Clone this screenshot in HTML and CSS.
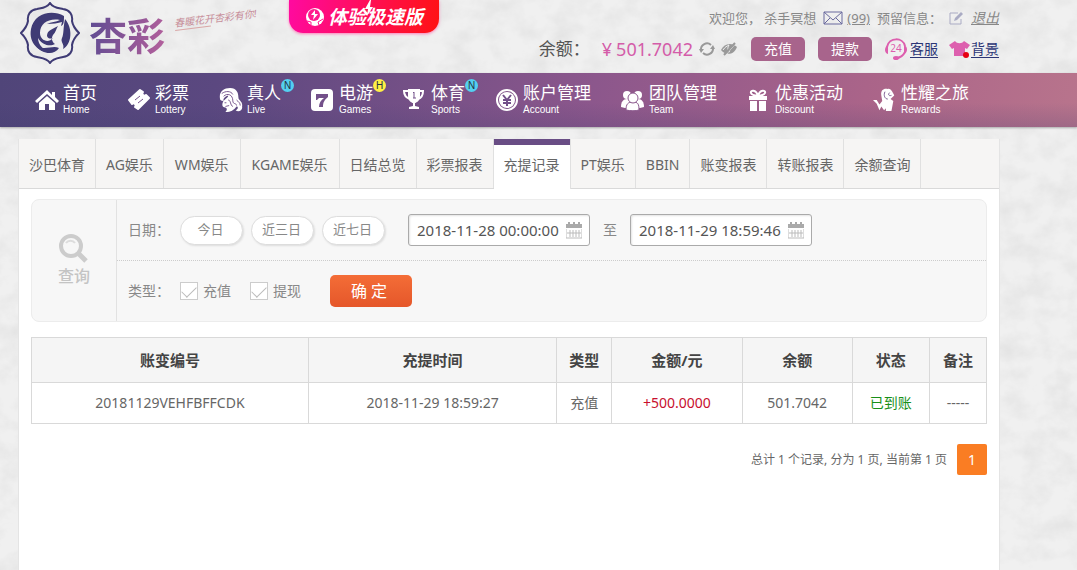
FILE: index.html
```html
<!DOCTYPE html>
<html lang="zh-CN">
<head>
<meta charset="utf-8">
<meta name="viewport" content="width=device-width, initial-scale=1">
<title>充提记录</title>
<link rel="stylesheet" href="styles.css">
</head>
<body>
<svg class="texture" aria-hidden="true">
  <defs>
    <filter id="grain" x="0" y="0" width="100%" height="100%">
      <feTurbulence type="fractalNoise" baseFrequency="0.04 0.05" numOctaves="5" seed="8"/>
      <feColorMatrix values="0 0 0 0 0.6  0 0 0 0 0.6  0 0 0 0 0.6  0.6 0 0 0 -0.22"/>
    </filter>
  </defs>
  <rect width="100%" height="100%" filter="url(#grain)"/>
</svg>

<header class="header">
  <a class="brand" href="#" aria-label="杏彩">
    <svg class="emblem" viewBox="0 0 60 62" aria-hidden="true">
      <path class="emblem-line" d="M30 1C33 6 38 6 43 7C50 8 53 13 52 19C53 25 56 28 59 31C56 34 53 37 52 43C53 49 50 54 43 55C38 56 33 56 30 61C27 56 22 56 17 55C10 54 7 49 8 43C7 37 4 34 1 31C4 28 7 25 8 19C7 13 10 8 17 7C22 6 27 6 30 1Z"/>
      <path class="emblem-fill" d="M44 14C32 7 14 11 11 27C8 43 22 52 32 50C24 49 18 43 18 36C22 43 30 45 35 42C32 40 31 36 33 33C36 30 36 27 38 24C33 27 27 28 27 34C28 37 31 37 33 36C28 42 20 38 20 31C20 21 29 16 40 18C36 20 31 20 27 22C33 22 38 21 42 20L41 24C44 23 44 19 44 14Z"/>
      <path class="emblem-fill" d="M45 17C53 26 52 42 43 47C45 42 40 40 42 36C44 32 43 26 45 17ZM16 44C26 49 32 43 39 46C34 54 22 52 16 44Z"/>
    </svg>
    <span class="wordmark">杏彩</span>
    <span class="slogan">春暖花开杏彩有你!</span>
  </a>

  <a class="promo" href="#">
    <svg class="promo-icon" viewBox="0 0 20 20" aria-hidden="true">
      <circle cx="10" cy="10" r="9" fill="#fff"/>
      <circle cx="9" cy="8" r="6" fill="#ff1a8e"/>
      <path d="M10 3L6 8H9L8 13L13 7H10Z" fill="#fff"/>
      <path d="M2 14L6 15L6 18M18 12L13 15L14 18" fill="none" stroke="#ff1a8e"/>
    </svg>
    <span>体验极速版</span>
    <svg class="promo-bolt" viewBox="0 0 10 16" aria-hidden="true"><path d="M6 0L1 9H4L3 16L9 7H6L7 0Z" fill="#fff"/></svg>
  </a>

  <div class="account">
    <div class="welcome">
      <span>欢迎您， 杀手冥想</span>
      <a class="mail" href="#">
        <svg viewBox="0 0 20 14" width="20" height="14" aria-hidden="true"><path d="M1 1H19V13H1ZM1 1L10 9L19 1M1 13L7 7M19 13L13 7" fill="none" stroke="#69699d"/></svg>
        <span class="mail-count">(99)</span>
      </a>
      <span>预留信息：</span>
      <a class="edit" href="#" aria-label="编辑">
        <svg viewBox="0 0 15 15" width="15" height="15" aria-hidden="true"><path d="M9 2H1V13H12V8" fill="none" stroke="#aaabc4"/><path d="M5 10L6 7L12 1L14 3L8 9Z" fill="#aaabc4"/></svg>
      </a>
      <a class="logout" href="#">退出</a>
    </div>
    <div class="funds">
      <span class="balance-label">余额：</span>
      <span class="balance">¥<span>501.7042</span></span>
      <button class="icon-button" type="button" aria-label="刷新">
        <svg viewBox="0 0 16 16" width="16" height="16" aria-hidden="true"><path d="M2 9A6 6 0 0 1 12 4M14 7A6 6 0 0 1 4 12" fill="none" stroke="#999" stroke-width="2"/><path d="M0 8H5L2 12ZM11 8H16L14 4Z" fill="#999"/></svg>
      </button>
      <button class="icon-button" type="button" aria-label="隐藏余额">
        <svg viewBox="0 0 18 16" width="18" height="16" aria-hidden="true"><path d="M1 9C4 2 12 1 17 6C14 14 6 15 1 9Z" fill="#999"/><path d="M3 9C5 6 7 5 9 4C7 7 8 10 10 11" fill="none" stroke="#eee"/><path d="M5 15L16 2" stroke="#eee"/><path d="M4 14L15 2" stroke="#999" stroke-width="2"/></svg>
      </button>
      <button class="fund-button" type="button">充值</button>
      <button class="fund-button" type="button">提款</button>
      <a class="tool" href="#">
        <svg viewBox="0 0 24 24" width="24" height="24" aria-hidden="true"><path d="M3 10C5 0 19 0 21 9M21 15C19 19 16 21 12 21" fill="none" stroke="#dd5fae" stroke-width="2"/><path d="M4 8V17C0 16 0 10 4 8ZM20 8C24 9 24 16 20 17Z" fill="#dd5fae"/><ellipse cx="12" cy="21" rx="3" ry="2" fill="#dd5fae"/><text x="12" y="15" text-anchor="middle" font-size="10" fill="#dd5fae">24</text></svg>
        <span>客服</span>
      </a>
      <a class="tool tool-last" href="#">
        <svg viewBox="0 0 21 20" width="21" height="20" aria-hidden="true"><path d="M6 2C8 5 13 5 15 2L21 6L18 10L16 9V17H5V9L3 10L0 6Z" fill="#dd5fae"/><circle cx="17" cy="16" r="3" fill="#e60012"/></svg>
        <span>背景</span>
      </a>
    </div>
  </div>
</header>

<nav class="nav" aria-label="主导航">
  <a class="nav-item" href="#">
    <svg viewBox="0 0 24 24" aria-hidden="true"><path d="M12 2L0 13L2 15L12 6L22 15L24 13L20 9V4H17V7ZM12 8L4 15V22H10V16H14V22H20V15Z"/></svg>
    <span class="nav-text"><span class="nav-cn">首页</span><span class="nav-en">Home</span></span>
  </a>
  <a class="nav-item" href="#">
    <svg viewBox="0 0 24 24" aria-hidden="true"><path d="M2 12L13 2L16 4A2 2 0 0 0 19 7L22 10L11 21L8 19A2 2 0 0 0 5 16Z" stroke="#fff" stroke-width="2" stroke-linejoin="round"/><path class="cut" d="M8 12L13 8M11 15L16 11"/></svg>
    <span class="nav-text"><span class="nav-cn">彩票</span><span class="nav-en">Lottery</span></span>
  </a>
  <a class="nav-item" href="#">
    <svg viewBox="0 0 24 26" aria-hidden="true"><path d="M0 11C-1 4 4 0 11 0C18 0 20 5 20 10C20 14 25 14 24 20C25 24 20 27 17 24C20 23 20 20 18 20C15 24 12 26 6 26C8 24 8 22 6 21C3 21 2 19 3 16C4 12 9 11 9 8C5 9 3 12 4 14C1 14 0 13 0 11Z"/><path class="cut" d="M2 6C6 3 12 3 14 7M4 9C8 5 14 7 14 14C14 18 18 16 18 19M9 13C12 13 11 19 14 20M5 16L7 16M6 20L10 19M18 13C20 15 22 16 22 19"/></svg>
    <span class="nav-text"><span class="nav-cn">真人</span><span class="nav-en">Live</span></span>
    <span class="badge">N</span>
  </a>
  <a class="nav-item" href="#">
    <svg viewBox="0 0 24 24" aria-hidden="true"><rect x="0" y="1" width="22" height="22" rx="4"/><path d="M5 6H17V9C13 12 12 15 12 19H8C8 15 10 12 13 10H8L6 12H5Z" fill="#73508a"/></svg>
    <span class="nav-text"><span class="nav-cn">电游</span><span class="nav-en">Games</span></span>
    <span class="badge badge-hot">H</span>
  </a>
  <a class="nav-item" href="#">
    <svg viewBox="0 0 24 24" aria-hidden="true"><path d="M5 1H17V8C17 13 13 15 12 15V18L16 19V21H6V19L10 18V15C9 15 5 13 5 8Z"/><path d="M5 3H1C1 8 4 10 7 11M17 3H20C20 8 18 10 15 11" fill="none" stroke="#fff" stroke-width="2"/><path class="cut" d="M10 5L11 4V10M10 10H13"/></svg>
    <span class="nav-text"><span class="nav-cn">体育</span><span class="nav-en">Sports</span></span>
    <span class="badge">N</span>
  </a>
  <a class="nav-item" href="#">
    <svg viewBox="0 0 24 24" aria-hidden="true"><circle cx="12" cy="12" r="10" fill="none" stroke="#fff" stroke-width="2"/><circle cx="12" cy="12" r="8"/><path class="cut cut-bold" d="M8 7L12 12L16 7M12 12V18M8 12H16M8 15H16"/></svg>
    <span class="nav-text"><span class="nav-cn">账户管理</span><span class="nav-en">Account</span></span>
  </a>
  <a class="nav-item" href="#">
    <svg viewBox="0 0 24 24" aria-hidden="true"><circle cx="6" cy="7" r="4"/><circle cx="17" cy="7" r="4"/><path d="M0 19C0 14 2 11 6 11H17C21 11 23 14 23 19L19 20H4Z"/><path d="M5 22C5 16 7 14 12 14S18 16 18 22C15 23 9 23 5 22Z" stroke="#8b588d"/><circle cx="12" cy="10" r="5" stroke="#8b588d"/></svg>
    <span class="nav-text"><span class="nav-cn">团队管理</span><span class="nav-en">Team</span></span>
  </a>
  <a class="nav-item" href="#">
    <svg viewBox="0 0 24 24" aria-hidden="true"><path d="M2 8H20V12H2ZM3 13H10V23H3ZM12 13H19V23H12Z"/><path d="M11 8C9 1 3 2 4 5C5 8 9 7 11 8C13 7 17 8 18 5C19 2 13 1 11 8Z" fill="none" stroke="#fff" stroke-width="2"/></svg>
    <span class="nav-text"><span class="nav-cn">优惠活动</span><span class="nav-en">Discount</span></span>
  </a>
  <a class="nav-item" href="#">
    <svg viewBox="0 0 24 26" aria-hidden="true"><path d="M8 8C7 2 11 0 15 1C18 0 20 4 22 8L18 12L21 14L19 25H13V22L11 24L8 20L6 24L3 17L-1 13L3 13L6 18L9 14Z"/><path class="cut" d="M12 4C10 8 12 12 15 12M17 5C15 7 16 9 19 8"/></svg>
    <span class="nav-text"><span class="nav-cn">性耀之旅</span><span class="nav-en">Rewards</span></span>
  </a>
</nav>

<main class="page">
  <nav class="tabs" aria-label="报表">
    <a href="#">沙巴体育</a>
    <a href="#">AG娱乐</a>
    <a href="#" class="roomy">WM娱乐</a>
    <a href="#" class="roomy">KGAME娱乐</a>
    <a href="#">日结总览</a>
    <a href="#">彩票报表</a>
    <a href="#" class="active" aria-current="page">充提记录</a>
    <a href="#">PT娱乐</a>
    <a href="#">BBIN</a>
    <a href="#">账变报表</a>
    <a href="#">转账报表</a>
    <a href="#">余额查询</a>
  </nav>

  <form class="search">
    <div class="search-title">
      <svg viewBox="0 0 30 30" width="30" height="30" aria-hidden="true"><circle cx="12" cy="12" r="10" fill="none" stroke="#ccc" stroke-width="4"/><path d="M20 20L27 27" stroke="#ccc" stroke-width="5"/><path d="M7 9C9 6 14 6 16 9" fill="none" stroke="#ddd" stroke-width="2"/></svg>
      <span>查询</span>
    </div>
    <div class="search-rows">
      <div class="search-row search-date">
        <span class="search-label">日期：</span>
        <div class="pills">
          <button class="pill" type="button">今日</button>
          <button class="pill" type="button">近三日</button>
          <button class="pill" type="button">近七日</button>
        </div>
        <div class="date-field">
          <input type="text" value="2018-11-28 00:00:00" aria-label="开始时间">
          <svg viewBox="0 0 16 17" width="16" height="17" aria-hidden="true"><path d="M0 2H2V0H4V2H7V0H9V2H12V0H14V2H16V6H0Z" fill="#aaa"/><path d="M0 7V16H16V7M4 8V15M7 8V15M10 8V15M13 8V15M1 11H15" fill="none" stroke="#bbb"/></svg>
        </div>
        <span class="to">至</span>
        <div class="date-field">
          <input type="text" value="2018-11-29 18:59:46" aria-label="结束时间">
          <svg viewBox="0 0 16 17" width="16" height="17" aria-hidden="true"><path d="M0 2H2V0H4V2H7V0H9V2H12V0H14V2H16V6H0Z" fill="#aaa"/><path d="M0 7V16H16V7M4 8V15M7 8V15M10 8V15M13 8V15M1 11H15" fill="none" stroke="#bbb"/></svg>
        </div>
      </div>
      <div class="search-row">
        <span class="search-label">类型：</span>
        <div class="checks">
          <label><input type="checkbox" checked>充值</label>
          <label><input type="checkbox" checked>提现</label>
        </div>
        <button class="submit" type="submit">确 定</button>
      </div>
    </div>
  </form>

  <table class="records">
    <colgroup>
      <col class="col-id"><col class="col-time"><col class="col-type"><col class="col-amount"><col class="col-balance"><col class="col-status"><col class="col-note">
    </colgroup>
    <thead>
      <tr><th>账变编号</th><th>充提时间</th><th>类型</th><th>金额/元</th><th>余额</th><th>状态</th><th>备注</th></tr>
    </thead>
    <tbody>
      <tr><td>20181129VEHFBFFCDK</td><td>2018-11-29 18:59:27</td><td>充值</td><td class="plus">+500.0000</td><td>501.7042</td><td class="done">已到账</td><td>-----</td></tr>
    </tbody>
  </table>

  <div class="pager">
    <span>总计 1 个记录, 分为 1 页, 当前第 1 页</span>
    <a href="#" aria-current="page">1</a>
  </div>
</main>
</body>
</html>
```

FILE: styles.css
```css
* {
  box-sizing: border-box;
}

body {
  margin: 0;
  min-height: 100vh;
  display: flex;
  flex-direction: column;
  background: #f0f0f0;
  color: #666;
  font: 14px/20px "Noto Sans", "Noto Sans CJK SC", sans-serif;
}

a {
  color: inherit;
  text-decoration: none;
}

button,
input {
  font: inherit;
  color: inherit;
}

svg {
  display: block;
  flex: none;
}

.texture {
  position: absolute;
  inset: 0;
  width: 100%;
  height: 100%;
  z-index: -1;
}

/* Header */
.header {
  display: flex;
  align-items: flex-start;
  max-width: 999px;
  height: 73px;
  padding-left: 20px;
}

.brand {
  display: flex;
  align-items: flex-start;
  flex: none;
  width: 269px;
  padding-top: 2px;
}

.emblem {
  width: 60px;
  height: 62px;
}

.emblem-line {
  fill: none;
  stroke: #3f3b75;
  stroke-width: 2;
}

.emblem-fill {
  fill: #3f3b75;
}

.wordmark {
  margin: 9px 9px 0 9px;
  font-size: 38px;
  line-height: 48px;
  font-weight: 700;
  background: linear-gradient(100deg, #5d4b92, #b5609c);
  background-clip: text;
  -webkit-background-clip: text;
  color: transparent;
}

.slogan {
  margin-top: 9px;
  color: #c78c98;
  font-size: 10px;
  line-height: 14px;
  font-style: italic;
  white-space: nowrap;
  transform: rotate(-7deg);
}

.slogan::after {
  content: "";
  display: block;
  width: 36px;
  border-top: 1px solid #d9a7a7;
}

.promo {
  position: relative;
  display: flex;
  align-items: center;
  justify-content: center;
  gap: 3px;
  flex: none;
  width: 150px;
  height: 33px;
  border-radius: 0 0 14px 14px;
  background: linear-gradient(100deg, #ff0aa0, #ff1212);
  box-shadow: 0 1px 3px #ff7cb8;
  color: #fff;
  font-size: 19px;
  line-height: 28px;
  font-weight: 700;
  font-style: italic;
}

.promo-icon {
  width: 20px;
  height: 20px;
}

.promo-bolt {
  position: absolute;
  left: 75px;
  top: 0;
  width: 10px;
  height: 16px;
}

.account {
  display: flex;
  flex-direction: column;
  align-items: flex-end;
  gap: 8px;
  margin-left: auto;
  padding-top: 8px;
}

.welcome,
.funds,
.mail,
.tool {
  display: flex;
  align-items: center;
  white-space: nowrap;
}

.welcome {
  gap: 7px;
  color: #888;
  font-size: 13px;
}

.mail {
  gap: 4px;
}

.mail-count,
.logout {
  text-decoration: underline;
}

.logout {
  font-style: italic;
  font-size: 14px;
}

.funds {
  height: 26px;
}

.balance-label {
  margin-right: 12px;
  color: #555;
  font-size: 17px;
}

.balance {
  display: flex;
  gap: 4px;
  margin-right: 6px;
  color: #d45ca9;
  font-size: 18px;
}

.icon-button {
  margin-right: 5px;
  padding: 0;
  border: 0;
  background: none;
}

.fund-button {
  width: 54px;
  height: 24px;
  margin: 0 0 0 13px;
  padding: 0;
  border: 0;
  border-radius: 5px;
  background: #a8648c;
  color: #fff;
}

.icon-button + .fund-button {
  margin-left: 8px;
}

.tool {
  gap: 2px;
  margin-left: 12px;
  color: #2b3576;
}

.tool span {
  border-bottom: 1px solid #2b3576;
  line-height: 16px;
}

.tool-last {
  gap: 1px;
  margin-left: 11px;
}

/* Main navigation */
.nav {
  display: flex;
  gap: 30px;
  height: 54px;
  padding: 10px 0 0 35px;
  background: linear-gradient(to bottom, transparent 55%, rgba(60, 60, 110, 0.2)), linear-gradient(100deg, #504579 0%, #5b4880 20%, #8c578c 55%, #aa6489 80%, #b8748c 100%);
  box-shadow: 0 1px 2px #aaa;
  color: #fff;
}

.nav-item {
  position: relative;
  display: flex;
  gap: 4px;
  flex: none;
}

.nav-item > svg {
  width: 24px;
  height: 24px;
  margin-top: 5px;
  fill: #fff;
}

.cut {
  fill: none;
  stroke: #73508a;
}

.cut-bold {
  stroke-width: 2;
}

.nav-text {
  display: flex;
  flex-direction: column;
}

.nav-cn {
  font-size: 17px;
  line-height: 20px;
}

.nav-en {
  font: 10px/14px "Liberation Sans", sans-serif;
}

.badge {
  position: absolute;
  right: -13px;
  top: -4px;
  width: 13px;
  height: 13px;
  border-radius: 50%;
  background: #54cff0;
  color: #234;
  font: 10px/13px "Liberation Sans", sans-serif;
  text-align: center;
}

.badge-hot {
  background: #fff045;
}

/* Page body */
.page {
  flex: 1;
  width: calc(100% - 18px);
  max-width: 982px;
  margin: 12px 0 0 18px;
  background: #fff;
  border: 1px solid #e4e4e4;
  border-top: 0;
  border-bottom: 0;
}

.tabs {
  display: flex;
  height: 50px;
  background: #f6f5f4;
  border-bottom: 1px solid #d9d9d9;
}

.tabs a {
  flex: none;
  height: 49px;
  padding: 6px 10px 0;
  border-right: 1px solid #e0e0e0;
  line-height: 40px;
}

.tabs .roomy {
  padding: 6px 11px 0;
}

.tabs .active {
  height: 50px;
  background: linear-gradient(#694d85 6px, #fff 6px);
}

.search {
  display: flex;
  margin: 10px 12px 15px;
  border: 1px solid #ececec;
  border-radius: 8px;
  background: #f7f7f7;
  color: #888;
}

.search-title {
  display: flex;
  flex-direction: column;
  align-items: center;
  justify-content: center;
  gap: 1px;
  flex: none;
  width: 85px;
  border-right: 1px solid #e2e2e2;
  color: #c4c4c4;
  font-size: 16px;
  line-height: 22px;
  font-weight: 500;
}

.search-rows {
  flex: 1;
}

.search-row {
  display: flex;
  align-items: center;
  height: 60px;
  padding-left: 11px;
}

.search-date {
  height: 61px;
  border-bottom: 1px dotted #ccc;
}

.search-label {
  width: 52px;
  white-space: nowrap;
}

.pills {
  display: flex;
  gap: 8px;
  margin-right: 23px;
}

.pill {
  width: 63px;
  height: 29px;
  padding: 0 2px 2px 0;
  border: 1px solid #ddd;
  border-radius: 15px;
  background: #fff;
  box-shadow: 1px 1px 2px #ddd;
  font-size: 13px;
}

.date-field {
  display: flex;
  align-items: center;
  width: 182px;
  height: 32px;
  padding: 0 7px 0 8px;
  border: 1px solid #aaa;
  border-radius: 3px;
  background: #fff;
  box-shadow: inset 1px 1px 2px #e4e4e4;
}

.date-field input {
  flex: 1;
  min-width: 0;
  padding: 0;
  border: 0;
  outline: 0;
  background: transparent;
  color: #555;
  font-size: 15px;
}

.to {
  margin: 0 13px;
}

.checks {
  display: flex;
  gap: 19px;
  margin-right: 29px;
}

.checks label {
  display: flex;
  align-items: center;
  gap: 5px;
}

.checks input {
  appearance: none;
  display: grid;
  place-items: start center;
  width: 18px;
  height: 18px;
  margin: 0;
  border: 1px solid #ccc;
  background: #fff;
}

.checks input:checked::before {
  content: "";
  width: 7px;
  height: 13px;
  border: solid #bbb;
  border-width: 0 1px 1px 0;
  transform: rotate(45deg);
}

.submit {
  width: 82px;
  height: 32px;
  padding: 0 4px 0 0;
  border: 0;
  border-radius: 5px;
  background: linear-gradient(#f46d37, #e5572a);
  color: #fff;
  font-size: 16px;
}

.records {
  width: calc(100% - 24px);
  margin-left: 12px;
  table-layout: fixed;
  border-collapse: collapse;
  text-align: center;
}

.col-id { width: 29%; }
.col-time { width: 26%; }
.col-type { width: 55px; }
.col-amount { width: 130px; }
.col-balance { width: 110px; }
.col-status { width: 77px; }
.col-note { width: 57px; }

.records th,
.records td {
  padding: 0;
  border: 1px solid #d9d9d9;
}

.records th {
  height: 45px;
  background: #f5f5f5;
  color: #444;
  font-size: 15px;
}

.records td {
  height: 41px;
}

.records .plus {
  color: #c8102e;
}

.records .done {
  color: #189018;
}

.pager {
  display: flex;
  align-items: center;
  justify-content: flex-end;
  gap: 10px;
  margin: 20px 12px 0;
  font-size: 12px;
}

.pager a {
  width: 30px;
  border-radius: 2px;
  background: #fa7d23;
  color: #fff;
  font-size: 14px;
  line-height: 31px;
  text-align: center;
}
```
